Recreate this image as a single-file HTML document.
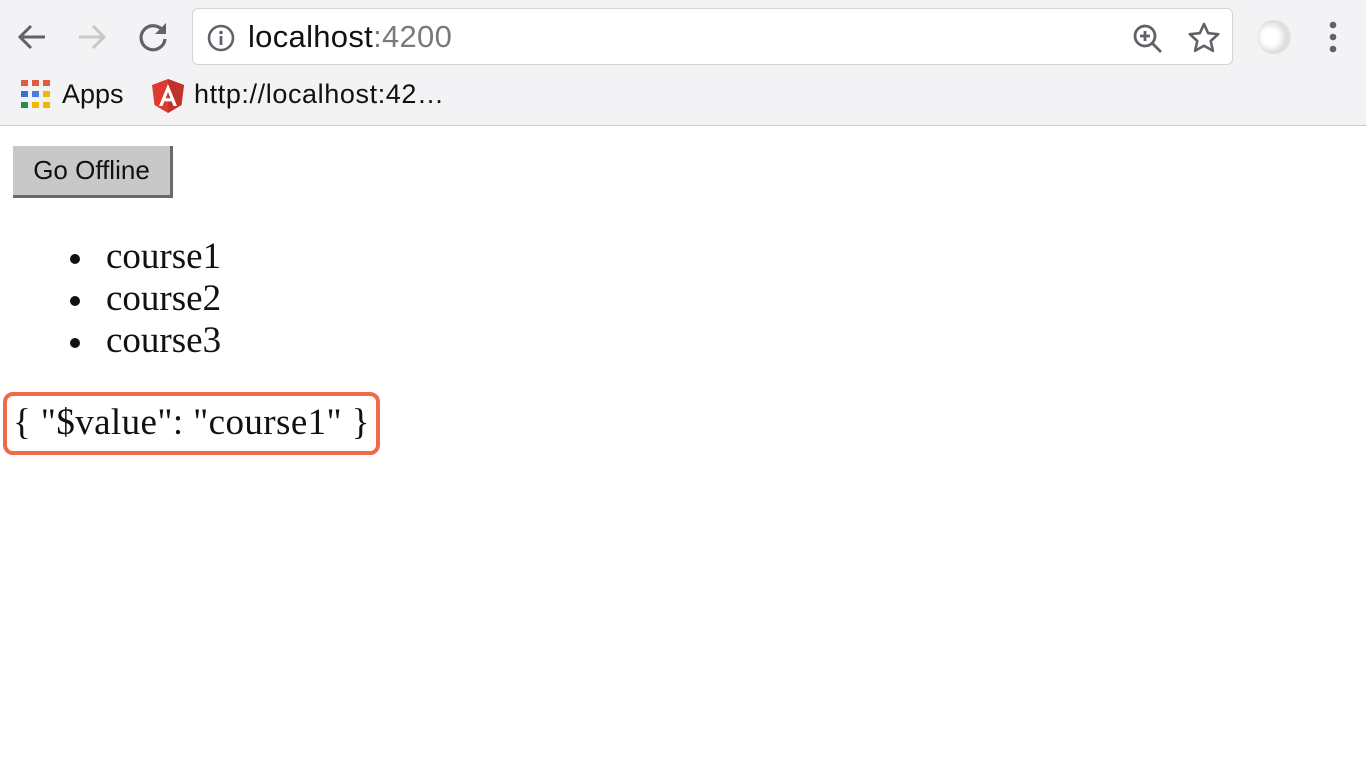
<!DOCTYPE html>
<html><head><meta charset="utf-8"><style>
*{margin:0;padding:0;box-sizing:border-box}
body{width:1366px;height:768px;background:#fff;position:relative;overflow:hidden;font-family:"Liberation Sans",sans-serif}
.bar{position:absolute;left:0;top:0;width:1366px;height:126px;background:#f3f2f5;border-bottom:1px solid #c9c9c9}
.url{position:absolute;left:192px;top:8px;width:1041px;height:57px;background:#fff;border:1px solid #d4d4d4;border-radius:6px}
.abs{position:absolute}
.btn{position:absolute;left:13px;top:146px;width:160px;height:52px;background:#c9c8c9;border-right:3px solid #6a6a6a;border-bottom:3px solid #6a6a6a;font-size:26px;line-height:49px;text-align:center;color:#111}
.serif{font-family:"Liberation Serif",serif;color:#111;font-size:37px}
.box{position:absolute;left:3px;top:392px;width:377px;height:63px;border:4px solid #f0694a;border-radius:10px}
.dot{position:absolute;left:70px;top:18px;width:10px;height:10px;border-radius:50%;background:#111}
</style></head><body>
<div class="bar">
<svg class="abs" style="left:16px;top:22px" width="32" height="30" viewBox="0 0 32 30"><path d="M29 15H5M15 4L4 15l11 11" stroke="#5f6368" stroke-width="3" fill="none"/></svg>
<svg class="abs" style="left:76px;top:22px" width="32" height="30" viewBox="0 0 32 30"><path d="M3 15h24M17 4l11 11-11 11" stroke="#c8c8c8" stroke-width="3" fill="none"/></svg>
<svg class="abs" style="left:136px;top:20px" width="34" height="34" viewBox="0 0 34 34"><path d="M27 11A12 12 0 1 0 29 19" stroke="#5f6368" stroke-width="3.2" fill="none"/><path d="M30 3v11H19z" fill="#5f6368"/></svg>
<div class="url">
<svg class="abs" style="left:13px;top:14px" width="30" height="30" viewBox="0 0 30 30"><circle cx="15" cy="15" r="12" stroke="#5f6368" stroke-width="2.6" fill="none"/><rect x="13.6" y="13" width="2.8" height="9" fill="#5f6368"/><circle cx="15" cy="9.5" r="1.8" fill="#5f6368"/></svg>
<div class="abs" style="left:55px;top:10px;font-size:31px;letter-spacing:0.3px;color:#111">localhost<span style="color:#7a7a7a">:4200</span></div>
<svg class="abs" style="left:938px;top:13px" width="34" height="34" viewBox="0 0 34 34"><circle cx="14" cy="14" r="10" stroke="#5f6368" stroke-width="2.8" fill="none"/><path d="M21 21l9 9M14 9v10M9 14h10" stroke="#5f6368" stroke-width="2.8"/></svg>
<svg class="abs" style="left:994px;top:12px" width="34" height="34" viewBox="0 0 34 34"><path d="M17 3l4.2 9.2 10 1-7.5 6.8 2.2 9.8L17 24.7 8.1 29.8l2.2-9.8L2.8 13.2l10-1z" stroke="#5f6368" stroke-width="2.6" fill="none" stroke-linejoin="round"/></svg>
</div>
<div class="abs" style="left:1257px;top:20px;width:34px;height:34px;border-radius:50%;background:radial-gradient(circle at 40% 50%,#fff 30%,#ddd 60%,#eee 100%)"></div>
<svg class="abs" style="left:1325px;top:20px" width="16" height="34"><circle cx="8" cy="5" r="3.3" fill="#5f6368"/><circle cx="8" cy="17" r="3.3" fill="#5f6368"/><circle cx="8" cy="29" r="3.3" fill="#5f6368"/></svg>
<svg class="abs" style="left:21px;top:80px" width="30" height="30">
<g><rect x="0" y="0" width="7" height="6" fill="#e25a3b"/><rect x="11" y="0" width="7" height="6" fill="#e25a3b"/><rect x="22" y="0" width="7" height="6" fill="#e25a3b"/>
<rect x="0" y="11" width="7" height="6" fill="#3d6fd8"/><rect x="11" y="11" width="7" height="6" fill="#4d7be0"/><rect x="22" y="11" width="7" height="6" fill="#f0b800"/>
<rect x="0" y="22" width="7" height="6" fill="#2e8c4a"/><rect x="11" y="22" width="7" height="6" fill="#f0b800"/><rect x="22" y="22" width="7" height="6" fill="#f0b800"/></g></svg>
<div class="abs" style="left:62px;top:79px;font-size:27px;color:#111">Apps</div>
<svg class="abs" style="left:151px;top:78px" width="34" height="36" viewBox="0 0 34 36"><path d="M17 1L1 7l2.5 20L17 35l13.5-8L33 7z" fill="#dd3b30"/><path d="M17 1v34l13.5-8L33 7z" fill="#c0322a"/><path d="M17 6L8 28h3.5l1.8-4.6h7.4l1.8 4.6H26zM14.6 20.3L17 14l2.4 6.3z" fill="#fff"/></svg>
<div class="abs" style="left:194px;top:79px;font-size:27px;letter-spacing:0.6px;color:#111">http://localhost:42…</div>
</div>
<div class="btn">Go Offline</div>
<div class="serif abs" style="left:0;top:236px;line-height:42px">
<div style="position:relative;padding-left:106px">course1<span class="dot"></span></div>
<div style="position:relative;padding-left:106px">course2<span class="dot"></span></div>
<div style="position:relative;padding-left:106px">course3<span class="dot"></span></div>
</div>
<div class="box"></div>
<div class="serif abs" style="left:13px;top:402px;line-height:42px;letter-spacing:0.4px">{ "$value": "course1" }</div>
</body></html>
